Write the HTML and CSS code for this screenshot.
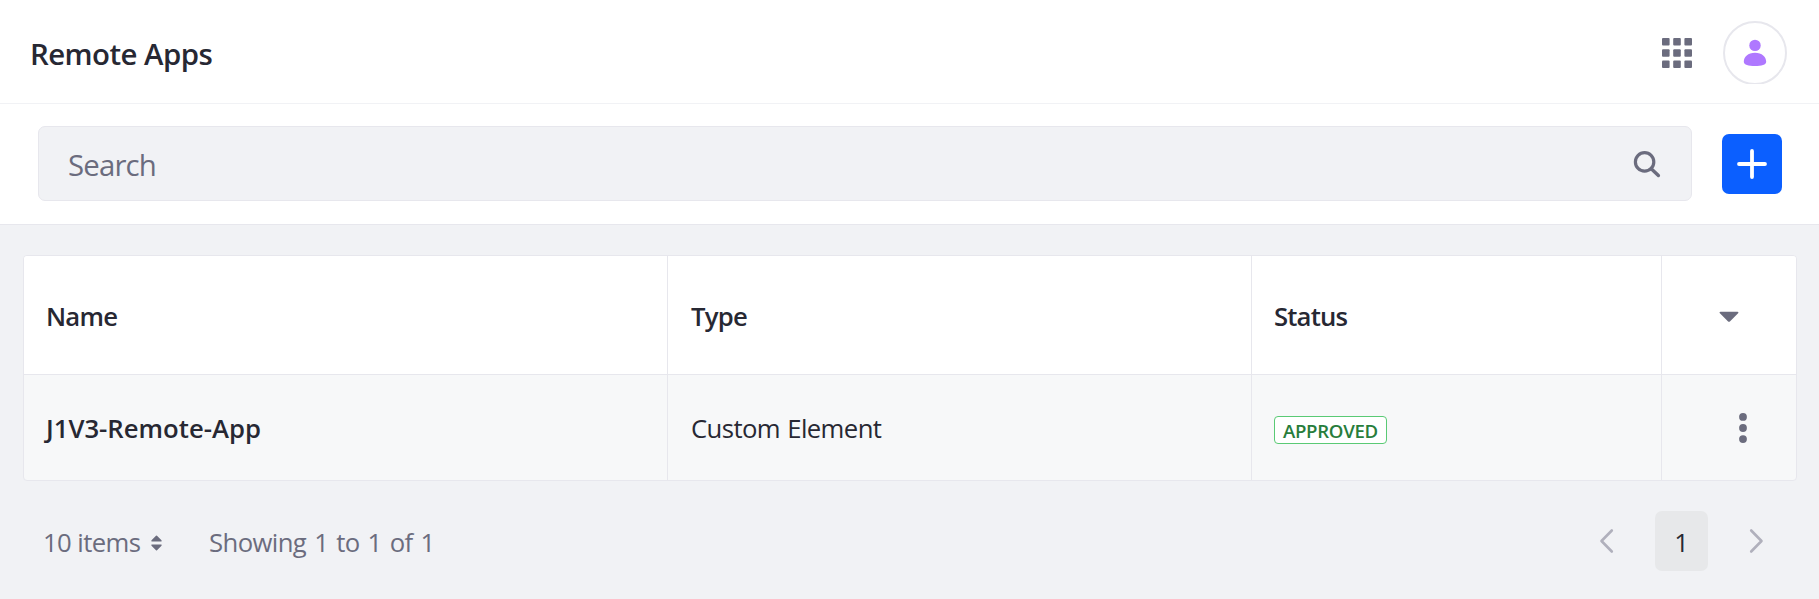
FILE: index.html
```html
<!DOCTYPE html>
<html lang="en">
<head>
<meta charset="utf-8">
<title>Remote Apps</title>
<link rel="stylesheet" href="styles.css">
</head>
<body>
<header class="topbar">
  <h1 class="title">Remote Apps</h1>
  <div class="topbar-actions">
    <svg class="apps-icon" viewBox="0 0 30 30" width="30" height="30"><g fill="#6b6c7e"><rect width="7.6" height="7.6" rx="1"/><rect x="11.2" width="7.6" height="7.6" rx="1"/><rect x="22.4" width="7.6" height="7.6" rx="1"/><rect y="11.2" width="7.6" height="7.6" rx="1"/><rect x="11.2" y="11.2" width="7.6" height="7.6" rx="1"/><rect x="22.4" y="11.2" width="7.6" height="7.6" rx="1"/><rect y="22.4" width="7.6" height="7.6" rx="1"/><rect x="11.2" y="22.4" width="7.6" height="7.6" rx="1"/><rect x="22.4" y="22.4" width="7.6" height="7.6" rx="1"/></g></svg>
    <svg class="avatar" viewBox="0 0 64 63" width="64" height="63"><circle cx="32" cy="32" r="31" fill="#fff" stroke="#e7e7ed" stroke-width="2"/><circle cx="32" cy="24.4" r="5.7" fill="#af78ff"/><path d="M32 31.7c7 0 11.2 4.200 11.200 9.100 0 2.900-4.700 4.300-11.200 4.300s-11.200-1.400-11.200-4.300c0-4.900 4.200-9.100 11.200-9.100z" fill="#af78ff"/></svg>
  </div>
</header>
<div class="toolbar">
  <div class="search">
    <span class="search-label">Search</span>
    <svg viewBox="0 0 26 26" width="26" height="26" fill="none" stroke="#6b6c7e"><circle cx="10.600" cy="10.900" r="9.200" stroke-width="3.200"/><path d="M17.500 18l6.900 6.500" stroke-width="3.400" stroke-linecap="round"/></svg>
  </div>
  <button class="add" aria-label="Add"><svg viewBox="0 0 30 30" width="30" height="30"><path d="M15 2v26M2 15h26" stroke="#fff" stroke-width="3.800" stroke-linecap="round"/></svg></button>
</div>
<main class="content">
  <div class="table">
    <div class="cell head name-head">Name</div>
    <div class="cell head type-head">Type</div>
    <div class="cell head status-head">Status</div>
    <div class="cell head center"><svg viewBox="0 0 20 12" width="20" height="12"><path d="M1.500.8h17c1 0 1.200.9.600 1.500l-8.200 8.100c-.6.600-1.200.6-1.800 0L.9 2.300C.3 1.700.5.800 1.500.8z" fill="#6b6c7e"/></svg></div>
    <div class="cell strong">J1V3-Remote-App</div>
    <div class="cell type">Custom Element</div>
    <div class="cell"><span class="badge">APPROVED</span></div>
    <div class="cell menu"><svg viewBox="0 0 8 30" width="8" height="30" fill="#6b6c7e"><circle cx="4" cy="3.900" r="3.900"/><circle cx="4" cy="15" r="3.900"/><circle cx="4" cy="26.100" r="3.900"/></svg></div>
  </div>
  <div class="pager">
    <span class="items">10 items</span>
    <svg class="sort" viewBox="0 0 11 16" width="11" height="16" fill="#6b6c7e"><path d="M5 .7q.5-.5 1 0l4.500 4.500q.7 1.200-.5 1.300h-9Q-.2 6.400.5 5.200zM5 15.300q.5.500 1 0l4.500-4.500q.7-1.200-.5-1.300h-9q-1.200.1-.5 1.300z"/></svg>
    <span class="showing">Showing 1 to 1 of 1</span>
    <nav class="pages">
      <svg viewBox="0 0 13 24" width="13" height="24"><path d="M11.800 1.500L1.500 12l10.300 10.500" fill="none" stroke="#b0b0bc" stroke-width="2.600" stroke-linecap="round" stroke-linejoin="round"/></svg>
      <span class="page">1</span>
      <svg viewBox="0 0 13 24" width="13" height="24"><path d="M1.200 1.500L11.500 12 1.200 22.500" fill="none" stroke="#b0b0bc" stroke-width="2.600" stroke-linecap="round" stroke-linejoin="round"/></svg>
    </nav>
  </div>
</main>
</body>
</html>
```
FILE: styles.css
```css
* { box-sizing: border-box; }
svg { display: block; flex: none; overflow: visible; }
.avatar { overflow: hidden; margin-bottom: 2px; }
body {
  margin: 0;
  height: 599px;
  overflow: hidden;
  background: #f1f2f5;
  color: #272833;
  font-family: "Open Sans", "Noto Sans", sans-serif;
  font-size: 25.7px;
  line-height: 36px;
  white-space: nowrap;
}
.topbar {
  display: flex;
  align-items: center;
  justify-content: space-between;
  height: 104px;
  padding: 3px 32px 0 30px;
  background: #fff;
  border-bottom: 1px solid #f1f2f5;
}
.title { margin: 2px 0 0; font-size: 29.4px; font-weight: 600; letter-spacing: -.55px; }
.topbar-actions { display: flex; align-items: center; gap: 31px; }
.toolbar {
  display: flex;
  align-items: center;
  gap: 30px;
  height: 121px;
  padding: 0 37px 0 38px;
  background: #fff;
  border-bottom: 1px solid #e7e7ed;
}
.search {
  display: flex;
  flex: 1;
  align-items: center;
  justify-content: space-between;
  height: 75px;
  margin-bottom: 1px;
  padding: 0 31px 0 29px;
  background: #f1f2f5;
  border: 1px solid #e7e7ed;
  border-radius: 7px;
  color: #6b6c7e;
  font-size: 29.4px;
}
.search-label { padding-top: 3px; letter-spacing: -.85px; }
.add {
  display: flex;
  align-items: center;
  justify-content: center;
  width: 60px;
  height: 60px;
  padding: 0;
  border: 0;
  border-radius: 7px;
  background: #0b5fff;
}
.content { padding: 30px 22px 0 23px; }
.table {
  display: grid;
  grid-template-columns: 644px 584px 410px 1fr;
  grid-template-rows: 119px 105px;
  border: 1px solid #e7e7ed;
  border-radius: 4px;
  background: #f7f8f9;
  overflow: hidden;
}
.cell {
  display: flex;
  align-items: center;
  padding: 4px 22px 0;
  border-right: 1px solid #e7e7ed;
}
.cell:nth-child(4n) { border-right: 0; }
.head { background: #fff; border-bottom: 1px solid #e7e7ed; font-weight: 600; letter-spacing: -.75px; }
.type-head { padding-left: 23px; }
.status-head { letter-spacing: -.85px; }
.strong { padding-top: 3px; font-weight: 600; }
.type { padding: 3px 0 0 23px; letter-spacing: -.6px; word-spacing: 1.200px; }
.center { justify-content: center; padding-top: 3px; }
.menu { justify-content: flex-end; padding: 1px 49px 0 0; }
.badge {
  width: 113px;
  height: 28px;
  padding: 0 8px;
  border: 1px solid #5aca75;
  border-radius: 4px;
  background: #fff;
  color: #287d3c;
  font-size: 18.600px;
  font-weight: 600;
  letter-spacing: -.3px;
  line-height: 28px;
}
.pager { display: flex; align-items: center; height: 60px; margin-top: 30px; padding: 0 34px 0 20px; color: #6b6c7e; }
.items, .showing { padding-top: 4px; letter-spacing: -.6px; }
.items { width: 96px; }
.showing { word-spacing: 1.900px; }
.sort { margin: 3px 47px 0 12px; }
.pages { display: flex; align-items: center; margin-left: auto; }
.page {
  width: 53px;
  height: 60px;
  margin: 0 42px;
  padding-top: 3px;
  border-radius: 7px;
  background: #e7e8ea;
  color: #272833;
  line-height: 58px;
  text-align: center;
}
```
